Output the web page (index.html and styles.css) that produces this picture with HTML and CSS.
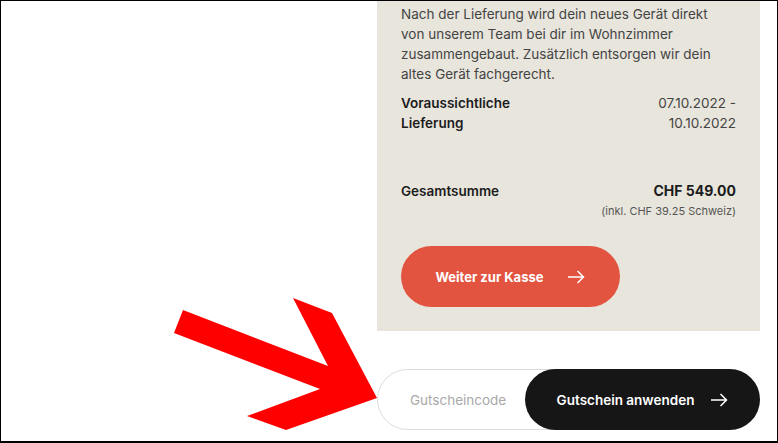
FILE: index.html
```html
<!DOCTYPE html>
<html lang="de">

<head>
    <meta charset="UTF-8">
    <meta name="viewport" content="width=device-width, initial-scale=1.0">
    <title>Warenkorb</title>
    <link rel="stylesheet" href="styles.css">
</head>

<body>
    <div class="frame">
        <div class="side"></div>

        <div class="checkout">
            <div class="summary">
                <p class="delivery-text">Nach der Lieferung wird dein neues Gerät direkt von unserem Team bei dir im Wohnzimmer zusammengebaut. Zusätzlich entsorgen wir dein altes Gerät fachgerecht.</p>

                <div class="row">
                    <span class="row-label">Voraussichtliche<br>Lieferung</span>
                    <span class="row-value">07.10.2022 -<br>10.10.2022</span>
                </div>

                <div class="row total">
                    <span class="row-label">Gesamtsumme</span>
                    <span class="total-price">CHF 549.00</span>
                </div>
                <div class="tax-note">(inkl. CHF 39.25 Schweiz)</div>

                <button class="btn-checkout" type="button">
                    Weiter zur Kasse
                    <svg width="18" height="14" viewBox="0 0 18 14" fill="none" stroke="currentColor" stroke-width="1.5">
                        <path d="M1 7h15.5M10.5 1l6 6-6 6" />
                    </svg>
                </button>
            </div>

            <form class="coupon">
                <input class="coupon-input" type="text" placeholder="Gutscheincode">
                <button class="btn-coupon" type="button">
                    Gutschein anwenden
                    <svg width="18" height="14" viewBox="0 0 18 14" fill="none" stroke="currentColor" stroke-width="1.5">
                        <path d="M1 7h15.5M10.5 1l6 6-6 6" />
                    </svg>
                </button>
            </form>
        </div>

        <!-- marker pointing at the coupon field -->
        <svg class="pointer" width="778" height="443" viewBox="0 0 778 443">
            <polygon fill="#ff0000" points="183,310 328,366 293,298 332,313 377,398 286,430 247,416 320,389 174,333" />
        </svg>
    </div>
</body>

</html>
```

FILE: styles.css
```css
* {
    box-sizing: border-box;
}

body {
    margin: 0;
    padding: 0;
    font-family: Inter, "Open Sans", Arial, sans-serif;
    background-color: white;
}

.frame {
    position: relative;
    width: 778px;
    height: 443px;
    border: 1px solid #000;
    border-bottom-width: 2px;
    display: flex;
    overflow: hidden;
}

.side {
    flex: 1;
}

.checkout {
    width: 383px;
    margin-right: 17px;
    display: flex;
    flex-direction: column;
}

.summary {
    background-color: #e8e5dc;
    padding: 3px 24px 24px;
}

.delivery-text {
    margin: 0;
    max-width: 325px;
    font-size: 13.5px;
    line-height: 20px;
    color: #444;
}

.row {
    display: flex;
    justify-content: space-between;
    margin-top: 9px;
    font-size: 13.5px;
    line-height: 20px;
}

.row-label {
    font-weight: 600;
    color: #1c1c1c;
}

.row-value {
    text-align: right;
    color: #444;
}

.row.total {
    margin-top: 48px;
}

.total-price {
    font-weight: 700;
    font-size: 14px;
    color: #1c1c1c;
}

.tax-note {
    text-align: right;
    font-size: 11px;
    line-height: 16px;
    margin-top: 2px;
    color: #555;
}

.btn-checkout {
    margin-top: 27px;
    width: 219px;
    height: 61px;
    border: none;
    border-radius: 31px;
    background-color: #e2543f;
    color: white;
    font-family: inherit;
    font-size: 13px;
    font-weight: 700;
    display: flex;
    align-items: center;
    justify-content: center;
    gap: 24px;
    cursor: pointer;
}

.coupon {
    margin-top: 38px;
    display: flex;
    height: 61px;
    border: 1px solid #dcdcdc;
    border-radius: 31px;
}

.coupon-input {
    flex: 1;
    min-width: 0;
    border: none;
    background: transparent;
    padding-left: 32px;
    font-family: inherit;
    font-size: 13.5px;
    outline: none;
}

.coupon-input::placeholder {
    color: #a9a9a9;
}

.btn-coupon {
    margin: -1px -1px -1px 0;
    width: 235px;
    border: none;
    border-radius: 31px;
    background-color: #161616;
    color: white;
    font-family: inherit;
    font-size: 13.5px;
    font-weight: 600;
    display: flex;
    align-items: center;
    justify-content: center;
    gap: 16px;
    cursor: pointer;
}

.pointer {
    position: absolute;
    left: -1px;
    top: -1px;
    pointer-events: none;
}
```
